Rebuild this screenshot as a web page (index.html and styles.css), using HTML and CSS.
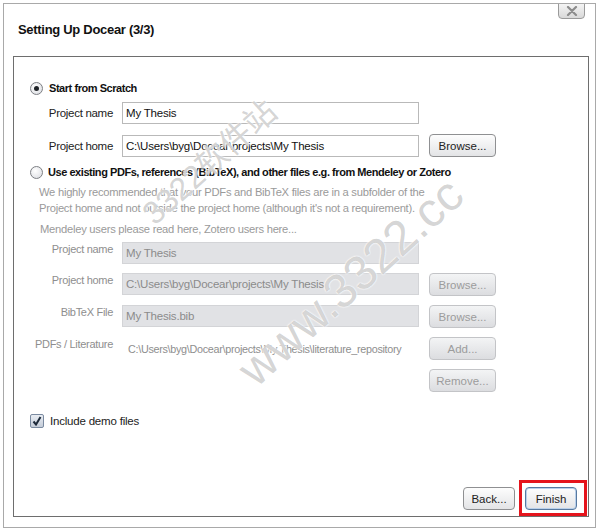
FILE: index.html
```html
<!DOCTYPE html>
<html lang="en">
<head>
  <meta charset="UTF-8" />
  <title>Setting Up Docear</title>
  <link rel="stylesheet" href="styles.css">
</head>
<body>
  <div class="window">
    <div class="header">
      <h1 class="title">Setting Up Docear (3/3)</h1>
      <button class="close" aria-label="Close">
        <svg width="14" height="10" viewBox="0 0 14 10"><path d="M3 1 L11 9 M11 1 L3 9" stroke="#8c8c8c" stroke-width="2.2" stroke-linecap="round"/></svg>
      </button>
    </div>

    <div class="panel">
      <label class="option">
        <span class="radio checked"></span>
        <span class="option-text">Start from Scratch</span>
      </label>

      <div class="fields first">
        <span class="label">Project name</span>
        <span class="field">My Thesis</span>
        <span></span>

        <span class="label">Project home</span>
        <span class="field">C:\Users\byg\Docear\projects\My Thesis</span>
        <button class="btn">Browse...</button>
      </div>

      <label class="option second">
        <span class="radio"></span>
        <span class="option-text">Use existing PDFs, references (BibTeX), and other files e.g. from Mendeley or Zotero</span>
      </label>
      <p class="hint">We highly recommended that your PDFs and BibTeX files are in a subfolder of the<br>Project home and not outside the project home (although it's not a requirement).</p>
      <p class="hint links">Mendeley users please read here, Zotero users here...</p>

      <div class="fields disabled">
        <span class="label">Project name</span>
        <span class="field">My Thesis</span>
        <span></span>

        <span class="label">Project home</span>
        <span class="field">C:\Users\byg\Docear\projects\My Thesis</span>
        <button class="btn">Browse...</button>

        <span class="label">BibTeX File</span>
        <span class="field">My Thesis.bib</span>
        <button class="btn">Browse...</button>

        <span class="label">PDFs / Literature</span>
        <span class="path">C:\Users\byg\Docear\projects\My Thesis\literature_repository</span>
        <button class="btn">Add...</button>

        <span></span>
        <span></span>
        <button class="btn">Remove...</button>
      </div>

      <label class="option demo">
        <span class="check">
          <svg width="10" height="10" viewBox="0 0 10 10"><path d="M1.5 5.5 L4 8.5 L8.5 1" fill="none" stroke="#1d2a3a" stroke-width="2"/></svg>
        </span>
        <span class="demo-text">Include demo files</span>
      </label>

      <div class="footer">
        <button class="btn nav">Back...</button>
        <div class="mark">
          <button class="btn nav primary">Finish</button>
        </div>
      </div>
    </div>

    <span class="watermark wm-cn">3322软件站</span>
    <span class="watermark wm-url">www.3322.cc</span>
  </div>
</body>
</html>
```

FILE: styles.css
```css
html, body {
  margin: 0;
  padding: 0;
  background: #fff;
  font-family: "Liberation Sans", Arial, "Noto Sans CJK SC", sans-serif;
  font-size: 11px;
  color: #222;
}

.window {
  position: relative;
  margin: 3px 0 0 3px;
  width: 591px;
  height: 523px;
  border: 1px solid #a9a9a9;
  display: flex;
  flex-direction: column;
  overflow: hidden;
}

.header {
  display: flex;
  justify-content: space-between;
  align-items: flex-start;
  height: 52px;
}

.title {
  margin: 18px 0 0 14px;
  font-size: 13px;
  font-weight: bold;
  color: #111;
  letter-spacing: -0.3px;
}

.close {
  margin: -2px 10px 0 0;
  width: 27px;
  height: 17px;
  padding: 0;
  border: 1px solid #9a9a9a;
  border-radius: 0 0 4px 4px;
  background: linear-gradient(#f6f6f6, #d9d9d9);
  display: flex;
  align-items: center;
  justify-content: center;
}

.panel {
  flex: 1;
  margin: 0 6px 10px 9px;
  border: 1px solid #6e6e6e;
  padding: 23px 0 0 16px;
  display: flex;
  flex-direction: column;
}

.option {
  display: flex;
  align-items: center;
  gap: 6px;
  height: 16px;
}

.option-text {
  font-weight: bold;
  color: #111;
  letter-spacing: -0.45px;
}

.option.second {
  margin-top: 7px;
  gap: 5px;
}

.radio {
  width: 11px;
  height: 11px;
  border: 1px solid #7d7f84;
  border-radius: 50%;
  background: radial-gradient(circle at 40% 35%, #fff, #d8dadf);
  display: flex;
  align-items: center;
  justify-content: center;
}

.radio.checked::after {
  content: "";
  width: 5px;
  height: 5px;
  border-radius: 50%;
  background: #1f2328;
}

.fields {
  display: grid;
  grid-template-columns: 83px 297px 68px;
  column-gap: 9px;
  row-gap: 10px;
  align-items: center;
}

.fields.first {
  margin-top: 6px;
}

.label {
  text-align: right;
  color: #222;
  letter-spacing: -0.3px;
}

.first .label {
  font-size: 11.5px;
}

.field {
  height: 20px;
  line-height: 21px;
  border: 1px solid #b9b9b9;
  background: #fff;
  padding: 0 3px;
  white-space: nowrap;
  overflow: hidden;
  font-size: 11.5px;
  letter-spacing: -0.2px;
  color: #111;
}

.btn {
  height: 23px;
  padding: 0 4px;
  font-family: inherit;
  font-size: 11.5px;
  color: #222;
  border: 1px solid #8f9092;
  border-radius: 4px;
  background: linear-gradient(#fdfdfd, #e3e4e6);
  margin-left: 1px;
}

.hint {
  margin: 4px 0 0 9px;
  line-height: 16px;
  color: #9a9a9a;
  letter-spacing: -0.25px;
  font-size: 11.2px;
}

.hint.links {
  margin-top: 5px;
  margin-left: 10px;
}

.fields.disabled {
  margin-top: 5px;
  row-gap: 9px;
  align-items: start;
}

.disabled .label,
.disabled .path {
  color: #8e8e8e;
}

.disabled .label {
  padding-top: 1px;
}

.disabled .field {
  background: #e1e2e5;
  border-color: #d3d4d7;
  color: #8b8b8b;
}

.disabled .path {
  padding: 6px 0 0 6px;
  white-space: nowrap;
  letter-spacing: -0.3px;
  font-size: 10.8px;
}

.disabled .btn {
  color: #9c9c9c;
  border-color: #c3c4c7;
  background: linear-gradient(#f3f4f5, #dcdde0);
}

.option.demo {
  margin-top: 21px;
}

.check {
  width: 12px;
  height: 12px;
  border: 1px solid #7a8aa0;
  border-radius: 2px;
  background: linear-gradient(#e9edf3, #c4ccd8);
  display: flex;
  align-items: center;
  justify-content: center;
}

.demo-text {
  font-size: 11.5px;
  letter-spacing: -0.2px;
  color: #222;
}

.footer {
  margin-top: auto;
  display: flex;
  justify-content: flex-end;
  align-items: flex-end;
  gap: 4px;
  margin-right: 1px;
}

.nav {
  width: 52px;
  margin: 0 0 6px;
}

.mark {
  border: 3px solid #e5141c;
  padding: 4px 7px 0 3px;
}

.mark .nav {
  margin-bottom: 3px;
}

.primary {
  border-color: #5779a0;
  box-shadow: inset 0 0 0 1px #b9d0ea;
}

.watermark {
  position: absolute;
  color: rgba(110, 110, 110, 0.3);
  text-shadow: 0 0 2px #fff, 0 0 2px #fff;
  transform: rotate(-42deg);
  white-space: nowrap;
  pointer-events: none;
}

.wm-cn {
  left: 120px;
  top: 133px;
  font-size: 32px;
}

.wm-url {
  left: 205px;
  top: 250px;
  font-size: 48px;
}
```
